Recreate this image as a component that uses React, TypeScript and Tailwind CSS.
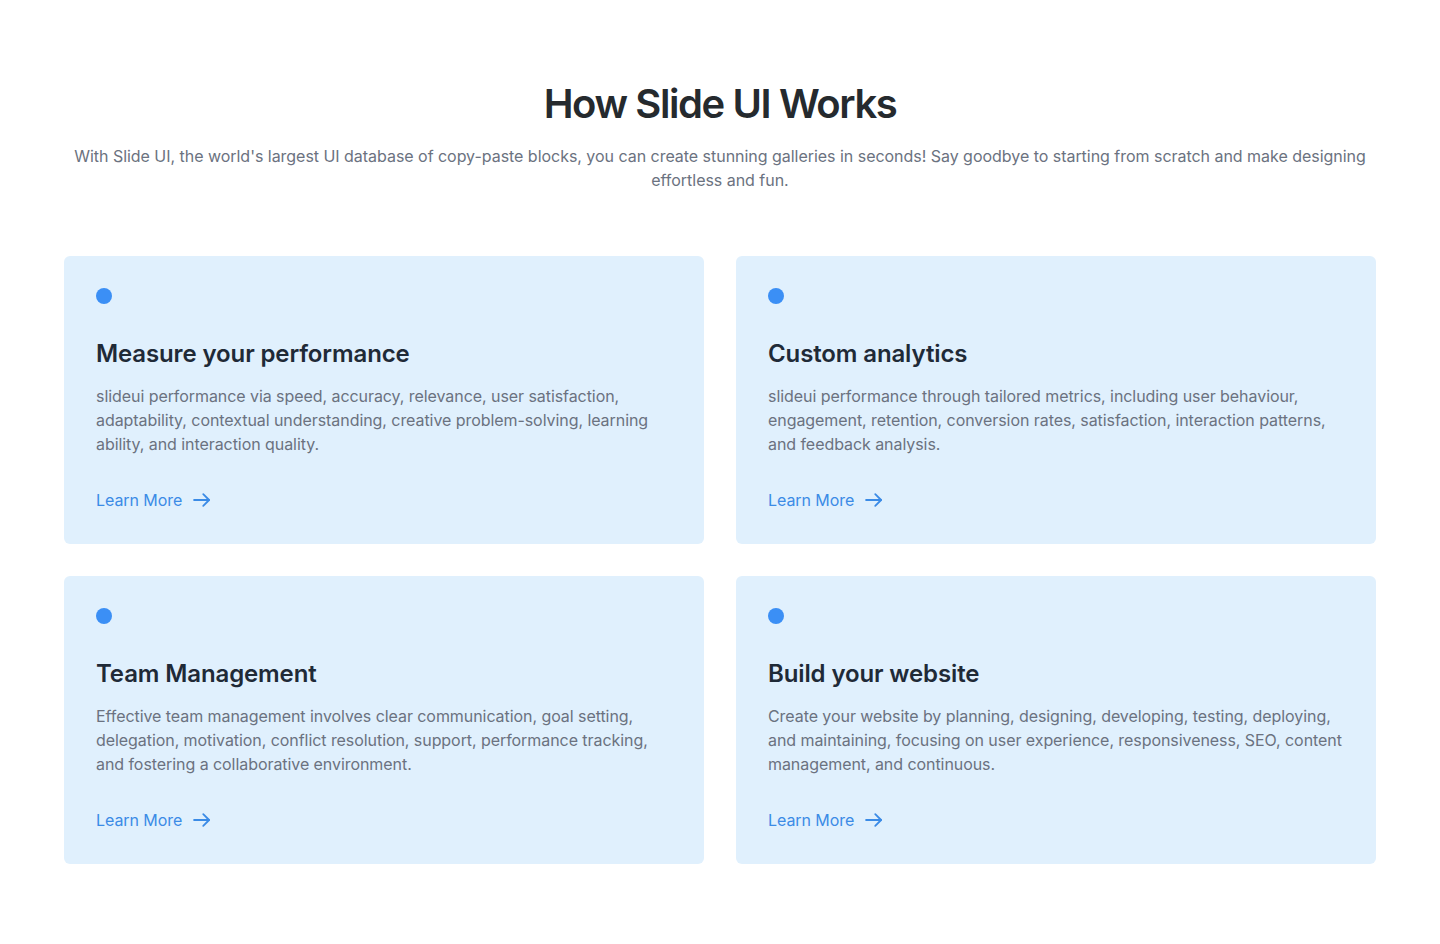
type TCard = {
  title: string;
  text: string;
};

const cards: TCard[] = [
  {
    title: "Measure your performance",
    text: "slideui performance via speed, accuracy, relevance, user satisfaction, adaptability, contextual understanding, creative problem-solving, learning ability, and interaction quality.",
  },
  {
    title: "Custom analytics",
    text: "slideui performance through tailored metrics, including user behaviour, engagement, retention, conversion rates, satisfaction, interaction patterns, and feedback analysis.",
  },
  {
    title: "Team Management",
    text: "Effective team management involves clear communication, goal setting, delegation, motivation, conflict resolution, support, performance tracking, and fostering a collaborative environment.",
  },
  {
    title: "Build your website",
    text: "Create your website by planning, designing, developing, testing, deploying, and maintaining, focusing on user experience, responsiveness, SEO, content management, and continuous.",
  },
];

const Arrow = () => (
  <svg width="20" height="20" viewBox="0 0 24 24" fill="none" stroke="currentColor" strokeWidth="2.2" strokeLinecap="round" strokeLinejoin="round">
    <path d="M2.5 12h18" />
    <path d="M13.5 5l7 7-7 7" />
  </svg>
);

const Card = ({ title, text }: TCard) => (
  <div className="rounded-md bg-[#e0f0fd] p-8">
    <div className="h-4 w-4 rounded-full bg-[#3b8ff5]" />
    <h3 className="mt-[34px] text-2xl leading-8 font-semibold tracking-[-0.005em] text-[#1f2a37]">{title}</h3>
    <p className="mt-[14px] text-base leading-6 tracking-[-0.004em] text-[#6b7280]">{text}</p>
    <a href="#" className="mt-8 inline-flex items-center gap-2.5 text-base leading-6 tracking-[-0.004em] text-[#3b8be6]">
      Learn More
      <Arrow />
    </a>
  </div>
);

const App = () => {
  return (
    <div className="min-h-screen bg-white font-['Inter',sans-serif]">
      <section className="mx-auto max-w-[1312px] pt-20 pb-20">
        <div className="text-center">
          <h2 className="text-[40px] leading-[48px] font-semibold tracking-[-0.035em] text-[#252a2e]">
            How Slide UI Works
          </h2>
          <p className="mx-auto mt-4 text-base leading-6 tracking-[-0.002em] text-[#6b7280]">
            With Slide UI, the world's largest UI database of copy-paste blocks, you can create stunning galleries in seconds! Say goodbye to starting from scratch and make designing effortless and fun.
          </p>
        </div>
        <div className="mt-16 grid grid-cols-2 gap-8">
          {cards.map((c) => (
            <Card key={c.title} title={c.title} text={c.text} />
          ))}
        </div>
      </section>
    </div>
  );
};

export default App;
